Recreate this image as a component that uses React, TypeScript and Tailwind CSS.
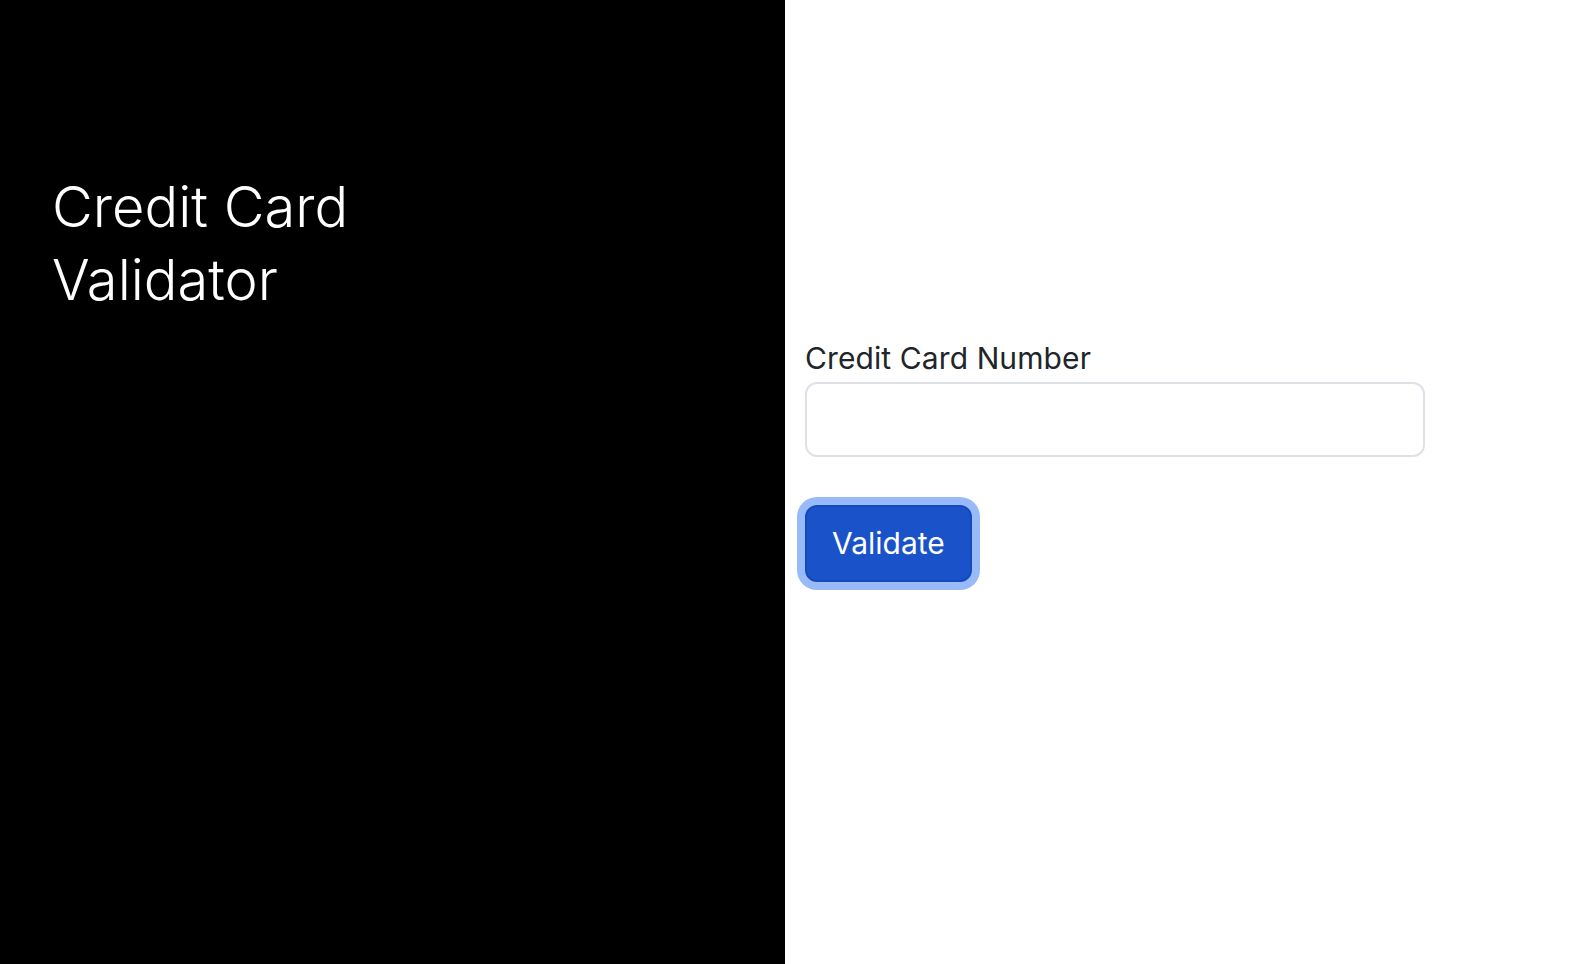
export default function App() {
  return (
    <div className="flex h-[964px] w-full font-['Inter',sans-serif]">
      {/* Left: title */}
      <div className="w-[785px] shrink-0 bg-black pl-[52px] pt-[171px]">
        <h1 className="text-[56px] font-light leading-[73px] text-white">
          Credit Card
          <br />
          Validator
        </h1>
      </div>

      {/* Right: form */}
      <div className="flex-1 bg-white pl-[20px] pt-[336px]">
        <label className="mb-px block text-[30px] leading-[45px] tracking-[0.1px] text-[#212529]">
          Credit Card Number
        </label>
        <input
          type="text"
          className="block h-[75px] w-[620px] rounded-[12px] border-2 border-[#dee2e6] px-[22px] text-[30px] outline-none"
        />
        <button className="mt-[48px] h-[77px] rounded-[12px] border-2 border-[#1749b8] bg-[#1a53c9] px-[25px] text-[30px] text-white ring-8 ring-[#98baf9]">
          Validate
        </button>
      </div>
    </div>
  );
}
